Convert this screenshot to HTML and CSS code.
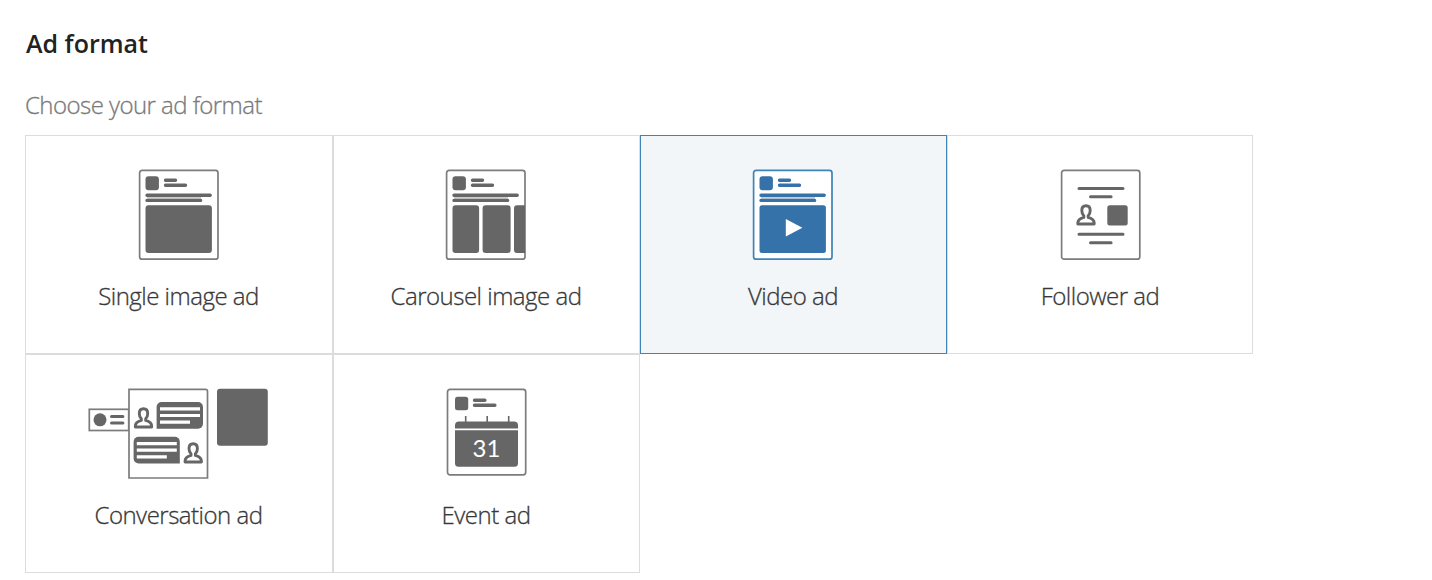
FILE: index.html
```html
<!DOCTYPE html>
<html lang="en">
  <head>
    <meta charset="UTF-8" />
    <meta name="viewport" content="width=device-width, initial-scale=1.0" />
    <title>Ad format</title>
    <link rel="stylesheet" href="styles.css">
  </head>
  <body>
    <!-- shared icon parts -->
    <svg class="symbols" width="0" height="0">
      <symbol id="post" viewBox="0 0 81 92">
        <rect class="sheet" x="1.6" y="1.4" width="78.4" height="88.8" rx="2.5" />
        <rect class="solid" x="7.5" y="7.2" width="13.4" height="14" rx="3" />
        <path class="gap" d="M9 28.8h54" />
        <path class="line" d="M27.5 11.2h10M27.5 16.2h20M9 26.2h63.2M9 31.4h53.6" />
      </symbol>
      <symbol id="person" viewBox="0 0 20 22">
        <path class="outline" d="M10 1.8c-2.9 0-4.2 2.1-4.2 4.8 0 2.5 1 4.2 2 5.2v1.6c-3.4 1-6 2.4-6 5.6v1h16.4v-1c0-3.2-2.6-4.6-6-5.6v-1.6c1-1 2-2.7 2-5.2 0-2.7-1.3-4.8-4.2-4.8z" />
      </symbol>
    </svg>

    <main class="ad-format">
      <h1>Ad format</h1>
      <p class="hint">Choose your ad format</p>

      <div class="format-grid">
        <button class="format">
          <svg class="icon" width="81" height="92">
            <use href="#post" />
            <rect class="solid" x="7.5" y="36.2" width="66.4" height="47.8" rx="3" />
          </svg>
          <span>Single image ad</span>
        </button>

        <button class="format">
          <svg class="icon" width="81" height="92">
            <use href="#post" />
            <rect class="solid" x="7.5" y="36.2" width="26.6" height="47.8" rx="3" />
            <rect class="solid" x="37.6" y="36.2" width="28" height="47.8" rx="3" />
            <path class="solid" d="M80 36.2h-8a3 3 0 0 0-3 3v41.8a3 3 0 0 0 3 3h8z" />
          </svg>
          <span>Carousel image ad</span>
        </button>

        <button class="format selected">
          <svg class="icon" width="81" height="92">
            <use href="#post" />
            <rect class="solid" x="7.5" y="36.2" width="66.4" height="47.8" rx="2.5" />
            <path class="cutout" d="M33.8 50v17.4l16.6-8.7z" />
          </svg>
          <span>Video ad</span>
        </button>

        <button class="format">
          <svg class="icon" width="81" height="92">
            <rect class="sheet" x="2.6" y="1.4" width="78.2" height="88.8" rx="2.5" />
            <path class="line thin" d="M20 19.4h44M31.5 27.8h20.6M20 65.2h44M31.5 73.8h20.6" />
            <use href="#person" x="17" y="35" width="20" height="22" />
            <rect class="solid" x="48.3" y="36.3" width="20.4" height="20.2" rx="2.5" />
          </svg>
          <span>Follower ad</span>
        </button>

        <button class="format">
          <svg class="icon" width="181" height="92">
            <rect class="sheet" x="1.3" y="21.3" width="39.4" height="21.2" />
            <circle class="solid" cx="12" cy="31.8" r="6.5" />
            <path class="line thin" d="M23.5 28.4h11.4M23.5 35h11.4" />
            <path class="sheet" d="M41 1.4h76.5a2 2 0 0 1 2 2V90H41z" />
            <use href="#person" x="45.5" y="19" width="20" height="22" />
            <path class="solid" d="M68.6 40.8V19a5 5 0 0 1 5-5H110a5 5 0 0 1 5 5v16.8a5 5 0 0 1-5 5z" />
            <path class="cutout-line" d="M72 20.9h40M72 27.5h40M72 34.2h30" />
            <path class="solid" d="M91.8 75.4H50.6a5 5 0 0 1-5-5V53.7a5 5 0 0 1 5-5h36.2a5 5 0 0 1 5 5z" />
            <path class="cutout-line" d="M48.8 55.6h40M48.8 62.2h40M48.8 68.8h30" />
            <use href="#person" x="95.2" y="54" width="20" height="22" />
            <rect class="solid" x="129" y="0.8" width="50.8" height="57" rx="3" />
          </svg>
          <span>Conversation ad</span>
        </button>

        <button class="format">
          <svg class="icon" width="81" height="92">
            <rect class="sheet" x="2.5" y="1.4" width="78.2" height="85.4" rx="2.5" />
            <rect class="solid" x="10" y="8.7" width="13.2" height="13.6" rx="2.5" />
            <path class="line" d="M29.5 12.3h10.4M29.5 17.3h20.4" />
            <path class="ring" d="M20.7 28v7M42.2 28v7M63.7 28v7" />
            <path class="solid" d="M10 40.6V37.5a4 4 0 0 1 4-4h55a4 4 0 0 1 4 4v3.1z" />
            <path class="solid" d="M10 42.2h63v33a3.5 3.5 0 0 1-3.5 3.5h-56a3.5 3.5 0 0 1-3.5-3.5z" />
            <text class="date" x="41.5" y="69.3">31</text>
          </svg>
          <span>Event ad</span>
        </button>
      </div>
    </main>
  </body>
</html>
```
FILE: styles.css
```css
:root {
  --icon-color: #666666;
  --sheet-border: #7c7c7c;
  --border-color: #dcdcdc;
  --selected-color: #3572a9;
  --selected-border: #3e84b8;
  --selected-background: #f3f6f8;
}

* {
  margin: 0;
  padding: 0;
  box-sizing: border-box;
}

body {
  font-family: "Segoe UI", "Open Sans", "Noto Sans", sans-serif;
  background-color: white;
  color: #333333;
}

.symbols {
  display: none;
}

.ad-format {
  padding: 25px 25px 0;
}

h1 {
  padding-left: 1px;
  font-size: 25px;
  font-weight: 600;
  line-height: 36px;
  color: #222222;
}

.hint {
  margin-top: 26px;
  font-size: 24px;
  font-weight: 300;
  letter-spacing: -0.55px;
  line-height: 36px;
  color: #7a7a7a;
  -webkit-text-stroke: 0.3px #7a7a7a;
}

.format-grid {
  display: grid;
  grid-template-columns: 308px 307px 307px 306px;
  grid-auto-rows: 219px;
  margin-top: 12px;
}

.format {
  display: flex;
  flex-direction: column;
  align-items: center;
  padding: 33px 2px 0 0;
  border: 1px solid var(--border-color);
  background-color: white;
  font-family: inherit;
  font-size: 24px;
  font-weight: 300;
  letter-spacing: -0.5px;
  line-height: 36px;
  color: #383838;
  cursor: pointer;
}

.format:nth-child(4n) {
  padding-right: 1px;
}

.format span {
  margin-top: 17px;
  padding-left: 1px;
  -webkit-text-stroke: 0.3px #383838;
}

.format.selected {
  --icon-color: var(--selected-color);
  --sheet-border: var(--selected-border);
  border: 1px solid var(--selected-border);
  background-color: var(--selected-background);
}

.icon {
  display: block;
  overflow: visible;
}

.sheet {
  fill: white;
  stroke: var(--sheet-border);
  stroke-width: 1.7;
}

.solid {
  fill: var(--icon-color);
}

.line {
  fill: none;
  stroke: var(--icon-color);
  stroke-width: 3.4;
  stroke-linecap: round;
}

.line.thin {
  stroke-width: 3;
}

.gap {
  stroke: #cccccc;
  stroke-width: 2;
}

.outline {
  fill: none;
  stroke: var(--icon-color);
  stroke-width: 2.9;
  stroke-linejoin: round;
}

.cutout {
  fill: white;
}

.cutout-line {
  fill: none;
  stroke: white;
  stroke-width: 3.2;
}

.ring {
  stroke: var(--icon-color);
  stroke-width: 1.6;
}

.date {
  fill: white;
  font-family: Lato, sans-serif;
  font-size: 24px;
  font-weight: 400;
  letter-spacing: 0;
  text-anchor: middle;
}
```
